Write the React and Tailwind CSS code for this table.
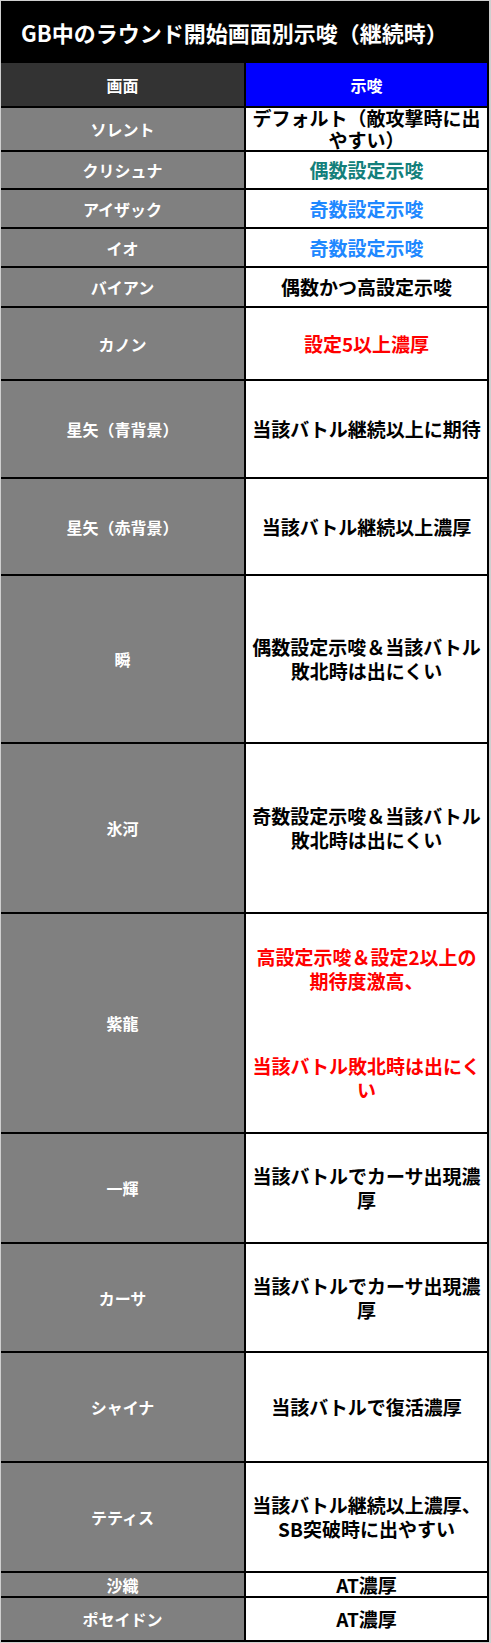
import React from "react";

const rows = [
  { name: "ソレント", h: "h-[44px]", lead: "leading-[22px]", color: "text-black", body: ["デフォルト（敵攻撃時に出", "やすい）"] },
  { name: "クリシュナ", h: "h-[38px]", color: "text-[#137f7b]", body: ["偶数設定示唆"] },
  { name: "アイザック", h: "h-[39px]", color: "text-[#1e88ff]", body: ["奇数設定示唆"] },
  { name: "イオ", h: "h-[39px]", color: "text-[#1e88ff]", body: ["奇数設定示唆"] },
  { name: "バイアン", h: "h-[40px]", color: "text-black", body: ["偶数かつ高設定示唆"] },
  { name: "カノン", h: "h-[73px]", color: "text-[#ff0000]", body: ["設定5以上濃厚"] },
  { name: "星矢（青背景）", h: "h-[98px]", color: "text-black", body: ["当該バトル継続以上に期待"] },
  { name: "星矢（赤背景）", h: "h-[97px]", color: "text-black", body: ["当該バトル継続以上濃厚"] },
  { name: "瞬", h: "h-[168px]", color: "text-black", body: ["偶数設定示唆＆当該バトル", "敗北時は出にくい"] },
  { name: "氷河", h: "h-[170px]", color: "text-black", body: ["奇数設定示唆＆当該バトル", "敗北時は出にくい"] },
  { name: "紫龍", h: "h-[220px]", color: "text-[#ff0000]", body: ["高設定示唆＆設定2以上の", "期待度激高、"], body2: ["当該バトル敗北時は出にく", "い"] },
  { name: "一輝", h: "h-[110px]", color: "text-black", body: ["当該バトルでカーサ出現濃", "厚"] },
  { name: "カーサ", h: "h-[109px]", color: "text-black", body: ["当該バトルでカーサ出現濃", "厚"] },
  { name: "シャイナ", h: "h-[110px]", color: "text-black", body: ["当該バトルで復活濃厚"] },
  { name: "テティス", h: "h-[110px]", color: "text-black", body: ["当該バトル継続以上濃厚、", "SB突破時に出やすい"] },
  { name: "沙織", h: "h-[25px]", color: "text-black", body: ["AT濃厚"] },
  { name: "ポセイドン", h: "h-[44px]", color: "text-black", body: ["AT濃厚"] },
];

function Lines({ lines }) {
  return (
    <div>
      {lines.map((l, i) => (
        <div key={i} className="whitespace-nowrap">
          {l}
        </div>
      ))}
    </div>
  );
}

export default function App() {
  return (
    <div className="w-[491px] border-l border-t border-b border-r-2 border-[#cfcfcf] bg-white font-['Noto_Sans_CJK_JP',sans-serif] font-bold">
      <div className="h-[62px] bg-black text-white text-[22px] flex items-center pl-[20px] whitespace-nowrap">
        GB中のラウンド開始画面別示唆（継続時）
      </div>
      <div className="flex h-[45px] border-b-2 border-black text-white text-[16px]">
        <div className="w-[245px] border-r-2 border-black bg-[#333333] flex items-center justify-center">
          画面
        </div>
        <div className="flex-1 border-r-2 border-black bg-[#0000ff] flex items-center justify-center">
          示唆
        </div>
      </div>
      {rows.map((r, i) => (
        <div key={i} className={`flex border-b-2 border-black ${r.h}`}>
          <div className="w-[245px] border-r-2 border-black bg-[#808080] flex items-center justify-center text-white text-[16px] leading-[20px]">
            {r.name}
          </div>
          <div
            className={`flex-1 border-r-2 border-black bg-white flex flex-col items-center justify-center text-center text-[19px] ${r.lead ? r.lead : "leading-[24px]"} ${r.color}`}
          >
            <Lines lines={r.body} />
            {r.body2 ? (
              <div className="mt-[61px]">
                <Lines lines={r.body2} />
              </div>
            ) : null}
          </div>
        </div>
      ))}
    </div>
  );
}
